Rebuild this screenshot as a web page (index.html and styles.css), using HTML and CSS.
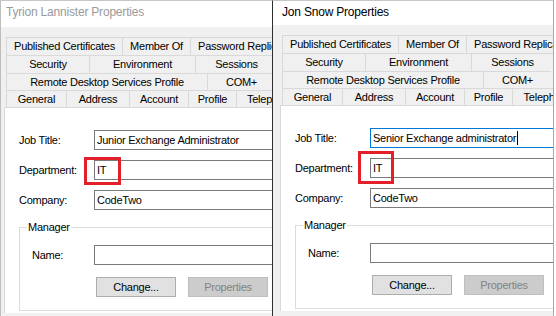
FILE: index.html
```html
<!DOCTYPE html>
<html>
<head>
<meta charset="utf-8">
<title>Properties</title>
<link rel="stylesheet" href="styles.css">
</head>
<body>
<div class="screen">
  <section class="win win-a">
    <header class="title title-inactive">Tyrion Lannister Properties</header>
    <div class="body">
      <div class="tabs">
        <div class="row r1">
          <div class="tab t-pub">Published Certificates</div>
          <div class="tab t-mem">Member Of</div>
          <div class="tab t-pwd">Password Replication</div>
        </div>
        <div class="row r2">
          <div class="tab t-sec">Security</div>
          <div class="tab t-env">Environment</div>
          <div class="tab t-ses">Sessions</div>
        </div>
        <div class="row r3">
          <div class="tab t-rdp">Remote Desktop Services Profile</div>
          <div class="tab t-com">COM+</div>
        </div>
        <div class="row r4">
          <div class="tab t-gen">General</div>
          <div class="tab t-adr">Address</div>
          <div class="tab t-acc">Account</div>
          <div class="tab t-pro">Profile</div>
          <div class="tab t-tel">Telephones</div>
        </div>
      </div>
      <div class="page">
        <div class="form">
          <div class="field"><span class="lbl">Job Title:</span><div class="input">Junior Exchange Administrator</div></div>
          <div class="field"><span class="lbl">Department:</span><div class="input">IT</div></div>
          <div class="field"><span class="lbl">Company:</span><div class="input">CodeTwo</div></div>
        </div>
        <div class="group">
          <div class="group-title">Manager</div>
          <div class="field name"><span class="lbl">Name:</span><div class="input"></div></div>
          <div class="buttons">
            <button class="btn" type="button">Change...</button>
            <button class="btn" type="button" disabled>Properties</button>
          </div>
        </div>
      </div>
    </div>
    <div class="mark mark-a"></div>
  </section>

  <section class="win win-b">
    <header class="title">Jon Snow Properties</header>
    <div class="body">
      <div class="tabs">
        <div class="row r1">
          <div class="tab t-pub">Published Certificates</div>
          <div class="tab t-mem">Member Of</div>
          <div class="tab t-pwd">Password Replication</div>
        </div>
        <div class="row r2">
          <div class="tab t-sec">Security</div>
          <div class="tab t-env">Environment</div>
          <div class="tab t-ses">Sessions</div>
        </div>
        <div class="row r3">
          <div class="tab t-rdp">Remote Desktop Services Profile</div>
          <div class="tab t-com">COM+</div>
        </div>
        <div class="row r4">
          <div class="tab t-gen">General</div>
          <div class="tab t-adr">Address</div>
          <div class="tab t-acc">Account</div>
          <div class="tab t-pro">Profile</div>
          <div class="tab t-tel">Telephones</div>
        </div>
      </div>
      <div class="page">
        <div class="form">
          <div class="field"><span class="lbl">Job Title:</span><div class="input focused">Senior Exchange administrator<span class="caret"></span></div></div>
          <div class="field"><span class="lbl">Department:</span><div class="input">IT</div></div>
          <div class="field"><span class="lbl">Company:</span><div class="input">CodeTwo</div></div>
        </div>
        <div class="group">
          <div class="group-title">Manager</div>
          <div class="field name"><span class="lbl">Name:</span><div class="input"></div></div>
          <div class="buttons">
            <button class="btn" type="button">Change...</button>
            <button class="btn" type="button" disabled>Properties</button>
          </div>
        </div>
      </div>
    </div>
    <div class="mark mark-b"></div>
  </section>
</div>
</body>
</html>
```

FILE: styles.css
```css
* { box-sizing: border-box; }
html, body { margin: 0; padding: 0; }
body {
  width: 556px;
  height: 316px;
  overflow: hidden;
  background: #ffffff;
  font-family: "Liberation Sans", Arial, sans-serif;
  font-size: 11px;
  letter-spacing: -0.25px;
  color: #000;
}
.screen { display: flex; height: 316px; }

.win {
  position: relative;
  flex: none;
  height: 316px;
  overflow: hidden;
  background: #f0f0f0;
  border-top: 1px solid #c6c6c6;
}
.win-a { width: 272px; border-left: 1px solid #bdbdbd; }
.win-b { width: 282px; border-left: 1px solid #2e2e2e; border-right: 1px solid #a9a9a9; }

.title {
  background: #fff;
  font-size: 12px;
  letter-spacing: -0.2px;
  line-height: 16px;
  padding-top: 3px;
  white-space: nowrap;
}
.win-a .title { height: 26px; padding-left: 5px; }
.win-b .title { height: 24px; padding-left: 9px; }
.title-inactive { color: #9a9a9a; }

.body { padding-top: 10px; }
.win-a .body { padding-left: 3px; }
.win-b .body { padding-left: 7px; }

.tabs { margin-left: 2px; }
.row { display: flex; height: 18px; }
.row.r3, .row.r4 { height: 17px; }
.tab {
  flex: none;
  border-top: 1px solid #d9d9d9;
  border-left: 1px solid #d9d9d9;
  text-align: center;
  line-height: 16px;
  white-space: nowrap;
  overflow: hidden;
}
.t-pub { width: 116px; }
.t-mem { width: 68px; }
.t-pwd { width: 116px; }
.t-sec { width: 83px; }
.t-env { width: 106px; }
.t-ses { width: 82px; }
.t-rdp { width: 201px; }
.t-com { width: 68px; }
.t-gen { width: 60px; }
.t-adr { width: 63px; }
.t-acc { width: 59px; }
.t-pro { width: 48px; }
.t-tel { width: 76px; }
.win-a .t-tel { width: 36px; text-align: left; padding-left: 10px; }

.page {
  width: 400px;
  height: 206px;
  background: #fff;
  border-top: 1px solid #d9d9d9;
  border-left: 1px solid #d9d9d9;
  padding: 22px 0 0 14px;
}

.form { display: flex; flex-direction: column; gap: 10px; }
.field { display: flex; align-items: center; height: 20px; }
.lbl { flex: none; width: 75px; white-space: nowrap; }
.input {
  flex: none;
  width: 260px;
  height: 20px;
  border: 1px solid #7a7a7a;
  background: #fff;
  padding-left: 2px;
  line-height: 18px;
  white-space: nowrap;
}
.input.focused { border-color: #0078d7; }
.caret {
  display: inline-block;
  width: 1px;
  height: 14px;
  background: #000;
  vertical-align: -3px;
  margin-left: 1px;
}

.group {
  margin-top: 17px;
  width: 300px;
  height: 84px;
  border: 1px solid #dcdcdc;
}
.group-title {
  width: max-content;
  margin: -8px 0 0 7px;
  padding: 0 1px;
  line-height: 14px;
  background: #fff;
}
.field.name { margin-top: 11px; padding-left: 12px; }
.field.name .lbl { width: 62px; }

.buttons { display: flex; gap: 12px; margin: 12px 0 0 76px; }
.btn {
  flex: none;
  width: 80px;
  height: 20px;
  margin: 0;
  padding: 0;
  font-family: "Liberation Sans", Arial, sans-serif;
  font-size: 11px;
  letter-spacing: -0.25px;
  color: #000;
  background: #e1e1e1;
  border: 1px solid #adadad;
  border-radius: 0;
}
.btn:disabled { background: #cccccc; border-color: #bfbfbf; color: #838383; }

.mark {
  position: absolute;
  border: 3px solid #e3202a;
}
.mark-a { left: 83px; top: 156px; width: 37px; height: 28px; }
.mark-b { left: 85px; top: 150px; width: 36px; height: 33px; }
```
